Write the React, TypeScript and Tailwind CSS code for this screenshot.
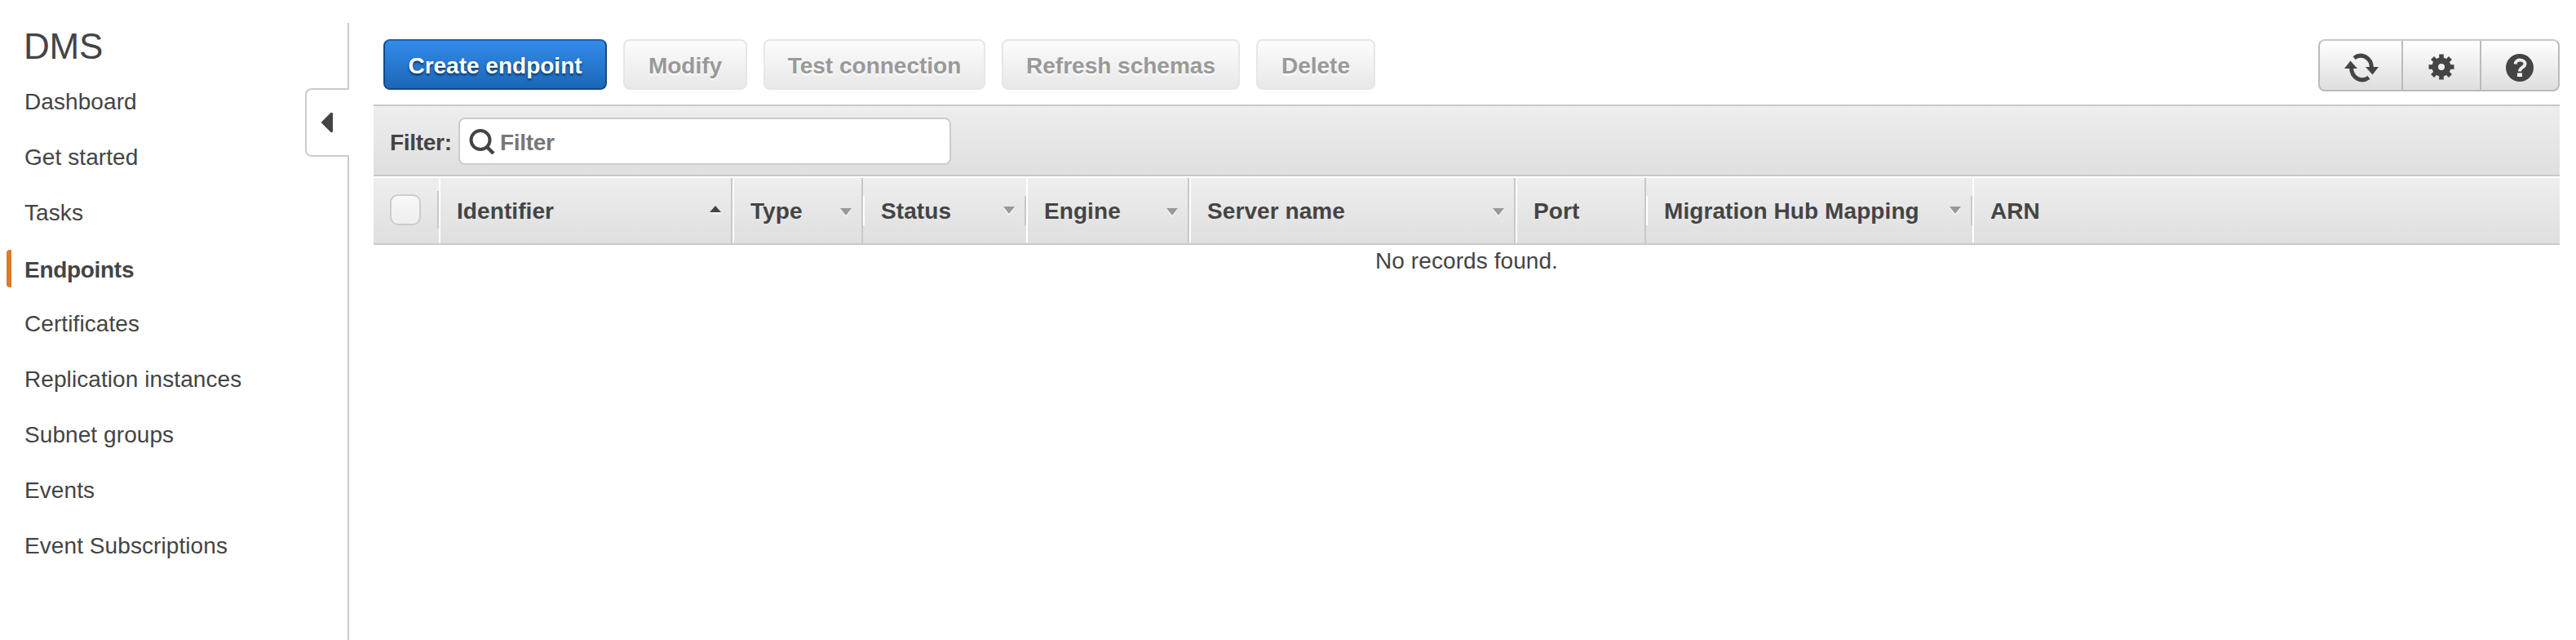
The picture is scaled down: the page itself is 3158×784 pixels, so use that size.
import React from "react";

const navItems = [
  "Dashboard",
  "Get started",
  "Tasks",
  "Endpoints",
  "Certificates",
  "Replication instances",
  "Subnet groups",
  "Events",
  "Event Subscriptions",
];

const actions = [
  { label: "Modify", width: "w-[152px]" },
  { label: "Test connection", width: "w-[272px]" },
  { label: "Refresh schemas", width: "w-[292px]" },
  { label: "Delete", width: "w-[146px]" },
];

type Sort = "asc" | "low" | "high" | "none";
type Edge = "full" | "shortGray" | "shortWhite" | "none";

const columns: { label: string; width: string; sort: Sort; edge: Edge }[] = [
  { label: "Identifier", width: "w-[360px]", sort: "asc", edge: "full" },
  { label: "Type", width: "w-[160px]", sort: "low", edge: "shortWhite" },
  { label: "Status", width: "w-[200px]", sort: "high", edge: "shortGray" },
  { label: "Engine", width: "w-[200px]", sort: "low", edge: "full" },
  { label: "Server name", width: "w-[400px]", sort: "low", edge: "full" },
  { label: "Port", width: "w-[160px]", sort: "none", edge: "shortWhite" },
  { label: "Migration Hub Mapping", width: "w-[400px]", sort: "high", edge: "shortGray" },
  { label: "ARN", width: "flex-1", sort: "none", edge: "none" },
];

const gearAngles = [0, 45, 90, 135, 180, 225, 270, 315];

function Divider({ edge }: { edge: Edge }) {
  if (edge === "none") return null;
  return (
    <span className="flex h-20 w-1 shrink-0 items-center">
      <span className={`w-0.5 bg-[#c8c8c8] ${edge === "shortGray" ? "h-9" : "h-20"}`} />
      <span className={`w-0.5 bg-white ${edge === "shortWhite" ? "h-9" : "h-20"}`} />
    </span>
  );
}

function SortMark({ sort }: { sort: Sort }) {
  if (sort === "none") return null;
  if (sort === "asc") {
    return (
      <svg className="mr-[11px] mb-0.5 h-3 w-4" viewBox="0 0 16 12">
        <path d="M1 9h14v2H1z" fill="#fff" opacity=".6" />
        <path d="M1 9 8 1l7 8z" fill="#444" />
      </svg>
    );
  }
  return (
    <svg className={`mr-[11px] h-3 w-4 ${sort === "low" ? "mt-1" : ""}`} viewBox="0 0 16 12">
      <path d="M1 2.5h14L8 12z" fill="#fff" opacity=".8" />
      <path d="M1 1h14L8 10z" fill="#999" />
    </svg>
  );
}

function Sidebar() {
  return (
    <aside className="relative flex w-[428px] shrink-0 flex-col pt-[25px]">
      <div className="absolute top-7 right-0 bottom-0 w-0.5 bg-[#ccc]" />
      <div className="absolute top-[108px] right-0 flex h-[84px] w-[54px] items-center rounded-l-lg border-2 border-r-0 border-[#ccc] bg-white pl-[18px]">
        <svg className="h-6 w-3.5" viewBox="0 0 14 24">
          <path d="M1 12 12 1h1v22h-1z" fill="#444" stroke="#444" strokeWidth="2" strokeLinejoin="round" />
        </svg>
      </div>
      <h1 className="h-[66px] pl-[29px] text-[44px] leading-[64px] tracking-[-0.2px]">DMS</h1>
      <nav className="flex flex-col">
        {navItems.map((item) =>
          item === "Endpoints" ? (
            <div key={item} className="flex h-[68px] items-center pl-2">
              <span className="h-[46px] w-1.5 rounded-l bg-[#e07b22]" />
              <span className="mt-1 pl-4 font-bold tracking-[-0.3px]">{item}</span>
            </div>
          ) : (
            <div key={item} className="h-[68px] pl-[30px] leading-[68px] tracking-[0.08px]">
              {item}
            </div>
          )
        )}
      </nav>
    </aside>
  );
}

function Toolbar() {
  return (
    <div className="flex h-16 items-start justify-between pl-3">
      <div className="flex gap-5 font-bold">
        <button className="h-[62px] w-[274px] rounded-lg border-2 border-[#164a85] border-t-[#1b62b5] bg-linear-to-b from-[#338cea] to-[#1b67b8] pt-[3px] text-white [text-shadow:0_2px_3px_rgba(0,0,0,0.6)]">
          Create endpoint
        </button>
        {actions.map((a) => (
          <button
            key={a.label}
            className={`h-[62px] rounded-lg border-2 border-[#e6e6e6] bg-linear-to-b from-[#fcfcfc] to-[#e8e8e8] pt-[3px] text-[#999] [text-shadow:0_2px_2px_#fff] ${a.width}`}
          >
            {a.label}
          </button>
        ))}
      </div>
      <div className="flex h-16 w-[296px] rounded-lg border-2 border-[#bbb] border-t-[#c8c8c8] bg-linear-to-b from-white to-[#dedede]">
        <button className="flex w-[102px] items-center justify-center border-r-2 border-[#bbb]">
          <svg className="mt-1.5 ml-0.5 h-9 w-[42px]" viewBox="0 0 42 36" fill="none">
            <path d="M12 6C21-.5 33.500 5 33.500 19" stroke="#444" strokeWidth="5" />
            <path d="M26 17h16l-7.500 9.500z" fill="#444" />
            <path d="M30 30C21 36.500 8.500 31 8.500 17" stroke="#444" strokeWidth="5" />
            <path d="M16 19H0L7.500 9.500z" fill="#444" />
          </svg>
        </button>
        <button className="flex w-24 items-center justify-center border-r-2 border-[#bbb]">
          <svg className="mt-1 h-8 w-8" viewBox="-16 -16 32 32" fill="none" stroke="#444">
            <circle r="7.8" strokeWidth="7.600" />
            {gearAngles.map((a) => (
              <path key={a} d="M0-9V-15.500" strokeWidth="5.600" transform={`rotate(${a})`} />
            ))}
          </svg>
        </button>
        <button className="flex flex-1 items-center justify-center">
          <svg className="mt-1.5 h-[34px] w-[34px]" viewBox="0 0 34 34" fill="none">
            <circle cx="17" cy="17" r="17" fill="#444" />
            <path d="M11.500 12.500C12 5.500 24 6.500 23.500 12.500 23 17 17 16.500 17 21.500" stroke="#eee" strokeWidth="4" />
            <path d="M14 23.500h6V28h-6z" fill="#fff" />
          </svg>
        </button>
      </div>
    </div>
  );
}

function FilterBar() {
  return (
    <div className="mt-4 flex h-[88px] items-start border-y-2 border-[#c8c8c8] bg-linear-to-b from-[#eee] to-[#dfdfdf] pt-3.5 pl-5 font-bold">
      <span className="w-[84px] leading-[61px] tracking-[-0.3px]">Filter:</span>
      <div className="flex h-[58px] w-[604px] items-center rounded-lg border-2 border-[#ccc] bg-white pl-[11px]">
        <svg className="h-8 w-8" viewBox="0 0 32 32" fill="none" stroke="#444">
          <circle cx="14" cy="14.500" r="11.500" strokeWidth="4" />
          <path d="m22 23 8 8" strokeWidth="4.500" />
        </svg>
        <span className="pt-[3px] pl-1.5 tracking-[-0.3px] text-[#777]">Filter</span>
      </div>
    </div>
  );
}

function TableHeader() {
  return (
    <div className="mt-0.5 flex h-[82px] border-b-2 border-[#c8c8c8] bg-linear-to-b from-[#eee] to-[#dfdfdf] font-bold">
      <div className="flex w-[82px] items-center pl-5">
        <span className="-mt-0.5 h-[38px] w-[38px] rounded-[10px] border-2 border-[#ccc] bg-linear-to-b from-[#f8f8f8] to-[#eee]" />
        <span className="-mt-0.5 ml-5 h-[46px] w-0.5 shrink-0 bg-[#c8c8c8]" />
        <span className="h-20 w-0.5 shrink-0 bg-white" />
      </div>
      {columns.map((c) => (
        <div key={c.label} className={`flex items-center ${c.width}`}>
          <span className="flex-1 pt-0.5 pl-5 tracking-[0.08px] whitespace-nowrap">{c.label}</span>
          <SortMark sort={c.sort} />
          <Divider edge={c.edge} />
        </div>
      ))}
    </div>
  );
}

export default function App() {
  return (
    <div className="flex h-[784px] w-[3158px] overflow-hidden bg-white font-['Liberation_Sans',Arial,sans-serif] text-[28px] leading-8 text-[#444]">
      <Sidebar />
      <main className="flex flex-1 flex-col pt-12 pr-5 pl-[30px]">
        <Toolbar />
        <FilterBar />
        <TableHeader />
        <p className="pt-1 text-center tracking-[0.08px]">No records found.</p>
      </main>
    </div>
  );
}
